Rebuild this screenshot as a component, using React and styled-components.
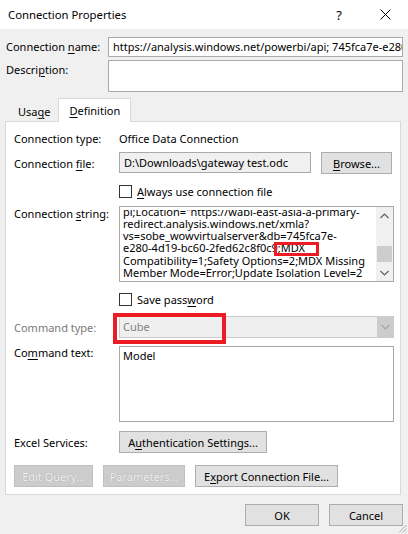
import React from 'react'
import styled, { createGlobalStyle } from 'styled-components'

const GlobalStyle = createGlobalStyle`
  html, body {
    margin: 0;
    padding: 0;
    background: #f0f0f0;
    overflow: hidden;
  }
`

const FONT = '"Noto Sans", "Liberation Sans", sans-serif'

const Window = styled.div`
  position: relative;
  width: 408px;
  height: 534px;
  background: #f0f0f0;
  font-family: ${FONT};
  font-size: 11px;
  color: #000;
  overflow: hidden;
`

const TitleBar = styled.div`
  display: flex;
  align-items: center;
  height: 29px;
  background: #fff;
  padding-left: 8px;
  font-size: 11.3px;
`

const Title = styled.span`
  flex: 1;
`

const TitleButton = styled.div`
  display: flex;
  align-items: center;
  justify-content: center;
  width: 46px;
  height: 29px;
  font-size: 13px;
`

const Header = styled.div`
  display: grid;
  grid-template-columns: 102px 295px;
  row-gap: 3px;
  padding: 8px 0 0 6px;
  align-items: start;
`

const HeaderLabel = styled.div`
  line-height: 20px;
  white-space: nowrap;
`

const Field = styled.div`
  height: ${(p) => p.h || 20}px;
  width: ${(p) => (p.w ? `${p.w}px` : 'auto')};
  box-sizing: border-box;
  border: 1px solid #a9a9a9;
  background: ${(p) => p.bg || '#fff'};
  padding: 0 4px;
  line-height: ${(p) => (p.h ? p.h - 2 : 18)}px;
  white-space: nowrap;
  overflow: hidden;
`

const TabStrip = styled.div`
  display: flex;
  align-items: flex-end;
  height: 24px;
  margin-top: 5px;
  padding-left: 8px;
`

const Tab = styled.div`
  box-sizing: border-box;
  height: ${(p) => (p.active ? 24 : 20)}px;
  padding: ${(p) => (p.active ? '0 10px' : '0 7px 0 9px')};
  display: flex;
  align-items: center;
  background: ${(p) => (p.active ? '#fff' : '#f0f0f0')};
  border: 1px solid ${(p) => (p.active ? '#d9d9d9' : 'transparent')};
  border-bottom: none;
  margin-bottom: ${(p) => (p.active ? -1 : 0)}px;
  position: relative;
  z-index: ${(p) => (p.active ? 1 : 0)};
`

const Panel = styled.div`
  box-sizing: border-box;
  margin-left: 5px;
  width: 396px;
  height: 374px;
  background: #fff;
  border: 1px solid #d9d9d9;
  padding: 0 0 0 8px;
`

const Row = styled.div`
  display: grid;
  grid-template-columns: 105px 1fr;
  align-items: ${(p) => p.align || 'center'};
  height: ${(p) => p.h}px;
  margin-top: ${(p) => p.top || 0}px;
  position: relative;
`

const Label = styled.div`
  white-space: nowrap;
  color: ${(p) => (p.disabled ? '#7a7a7a' : '#000')};
  line-height: ${(p) => p.lh || 'normal'};
`

const FileRow = styled.div`
  display: flex;
  gap: 10px;
`

const Button = styled.button`
  box-sizing: border-box;
  height: 22px;
  width: ${(p) => p.w}px;
  padding: 0;
  font-family: ${FONT};
  font-size: 11px;
  color: ${(p) => (p.disabled ? '#f2f2f2' : '#000')};
  text-shadow: ${(p) => (p.disabled ? '0 0 1px #9c9c9c' : 'none')};
  background: ${(p) => (p.disabled ? '#cccccc' : '#e1e1e1')};
  border: 1px solid ${(p) => (p.disabled ? '#bfbfbf' : '#adadad')};
  white-space: nowrap;
`

const CheckRow = styled.label`
  display: flex;
  align-items: center;
  gap: 5px;
  height: 14px;
`

const Box = styled.span`
  box-sizing: border-box;
  flex: none;
  width: 13px;
  height: 13px;
  border: 1px solid #333;
  background: #fff;
`

const TextArea = styled.div`
  position: relative;
  box-sizing: border-box;
  width: 275px;
  height: ${(p) => p.h}px;
  border: 1px solid #a9a9a9;
  background: #fff;
  display: flex;
`

const TextBody = styled.div`
  flex: 1;
  overflow: hidden;
  margin-top: ${(p) => p.inset || 0}px;
  padding: 0 3px;
  line-height: ${(p) => p.lh || 12.3}px;
`

const Scrolled = styled.div`
  margin-top: ${(p) => p.offset}px;
  white-space: pre;
`

const Mark = styled.span`
  position: relative;
  display: inline-block;
  height: 12.3px;
`

const ScrollBar = styled.div`
  width: 17px;
  display: flex;
  flex-direction: column;
  background: #f0f0f0;
`

const ScrollArrow = styled.div`
  height: 17px;
  display: flex;
  align-items: center;
  justify-content: center;
`

const ScrollTrack = styled.div`
  flex: 1;
  display: flex;
  flex-direction: column;
`

const Thumb = styled.div`
  margin: ${(p) => p.top}px 1px 0;
  height: 16px;
  background: #cdcdcd;
`

// red annotation frame drawn over a control
const Highlight = styled.div`
  position: absolute;
  box-sizing: border-box;
  left: ${(p) => p.x}px;
  top: ${(p) => p.y}px;
  width: ${(p) => p.w}px;
  height: ${(p) => p.h}px;
  border: ${(p) => p.b}px solid #ed1c24;
  pointer-events: none;
`

const Select = styled.div`
  position: relative;
  box-sizing: border-box;
  width: 275px;
  height: 22px;
  border: 1px solid #cccccc;
  background: #efefef;
  display: flex;
  color: #838383;
`

const SelectText = styled.div`
  flex: 1;
  padding-left: 3px;
  line-height: 20px;
`

const SelectArrow = styled.div`
  width: 16px;
  background: #cccccc;
  display: flex;
  align-items: center;
  justify-content: center;
`

const ButtonBar = styled.div`
  display: flex;
  gap: ${(p) => p.gap || 10}px;
  justify-content: ${(p) => p.justify || 'flex-start'};
  margin-top: ${(p) => p.top || 0}px;
  padding-right: ${(p) => p.right || 0}px;
`

const Grip = styled.svg`
  position: absolute;
  right: 1px;
  bottom: 1px;
`

const U = styled.span`
  text-decoration: underline;
  text-underline-offset: 2px;
`

const Chevron = ({ up, color = '#606060' }) => (
  <svg width="9" height="6" viewBox="0 0 9 6">
    <path
      d={up ? 'M0.5 5 L4.5 1 L8.5 5' : 'M0.5 1 L4.5 5 L8.5 1'}
      fill="none"
      stroke={color}
      strokeWidth="1.2"
    />
  </svg>
)

const connectionLines = [
  'pi;Location="https://wabi-east-asia-a-primary-\n',
  'redirect.analysis.windows.net/xmla?\n',
  'vs=sobe_wowvirtualserver&db=745fca7e-\n',
]
const connectionTail = [
  'Compatibility=1;Safety Options=2;MDX Missing\n',
  'Member Mode=Error;Update Isolation Level=2',
]

export default function App() {
  return (
    <>
      <GlobalStyle />
      <Window>
        <TitleBar>
          <Title>Connection Properties</Title>
          <TitleButton>?</TitleButton>
          <TitleButton>
            <svg width="11" height="11" viewBox="0 0 11 11">
              <path d="M0.5 0.5 L10.5 10.5 M10.5 0.5 L0.5 10.5" stroke="#000" strokeWidth="1" />
            </svg>
          </TitleButton>
        </TitleBar>

        <Header>
          <HeaderLabel>
            Connection <U>n</U>ame:
          </HeaderLabel>
          <Field>https://analysis.windows.net/powerbi/api; 745fca7e-e280-4d19-bc60-2fed62c8f0c9</Field>
          <HeaderLabel>
            Descri<U>p</U>tion:
          </HeaderLabel>
          <Field h={32} />
        </Header>

        <TabStrip>
          <Tab>
            Usa<U>g</U>e
          </Tab>
          <Tab active>
            <U>D</U>efinition
          </Tab>
        </TabStrip>

        <Panel>
          <Row h={18} top={7}>
            <Label>Connection type:</Label>
            <div>Office Data Connection</div>
          </Row>

          <Row h={22} top={5}>
            <Label>
              Connection <U>f</U>ile:
            </Label>
            <FileRow>
              <Field h={21} w={192} bg="#f0f0f0">
                D:\Downloads\gateway test.odc
              </Field>
              <Button w={71}>
                <U>B</U>rowse...
              </Button>
            </FileRow>
          </Row>

          <Row h={14} top={10}>
            <span />
            <CheckRow>
              <Box />
              <span>
                <U>A</U>lways use connection file
              </span>
            </CheckRow>
          </Row>

          <Row h={76} top={8} align="start">
            <Label lh="16px">
              Connection <U>s</U>tring:
            </Label>
            <TextArea h={76}>
              <TextBody inset={3}>
                <Scrolled offset={-4.5}>
                  {connectionLines.join('')}
                  e280-4d19-bc60-2fed62c8f0c9
                  <Mark>
                    ;MDX
                    <Highlight x={-4} y={-0.5} w={45} h={14.5} b={3} />
                  </Mark>
                  {'\n'}
                  {connectionTail.join('')}
                </Scrolled>
              </TextBody>
              <ScrollBar>
                <ScrollArrow>
                  <Chevron up />
                </ScrollArrow>
                <ScrollTrack>
                  <Thumb top={22} />
                </ScrollTrack>
                <ScrollArrow>
                  <Chevron />
                </ScrollArrow>
              </ScrollBar>
            </TextArea>
          </Row>

          <Row h={14} top={10}>
            <span />
            <CheckRow>
              <Box />
              <span>
                Save pass<U>w</U>ord
              </span>
            </CheckRow>
          </Row>

          <Row h={22} top={10}>
            <Label disabled>Command type:</Label>
            <Select>
              <SelectText>Cube</SelectText>
              <SelectArrow>
                <Chevron color="#a6a6a6" />
              </SelectArrow>
              <Highlight x={-7} y={-4} w={113} h={31} b={4} />
            </Select>
          </Row>

          <Row h={76} top={8} align="start">
            <Label lh="14px">
              Co<U>m</U>mand text:
            </Label>
            <TextArea h={76}>
              <TextBody lh={18}>Model</TextBody>
            </TextArea>
          </Row>

          <Row h={22} top={9}>
            <Label>Excel Services:</Label>
            <div>
              <Button w={148}>
                A<U>u</U>thentication Settings...
              </Button>
            </div>
          </Row>

          <ButtonBar top={12} gap={10}>
            <Button w={79} disabled>
              Edit Query...
            </Button>
            <Button w={82} disabled>
              Parameters...
            </Button>
            <Button w={143}>
              E<U>x</U>port Connection File...
            </Button>
          </ButtonBar>
        </Panel>

        <ButtonBar top={9} gap={10} justify="flex-end" right={5}>
          <Button w={74}>OK</Button>
          <Button w={74}>Cancel</Button>
        </ButtonBar>

        <Grip width="9" height="9" viewBox="0 0 9 9">
          <path d="M8.5 1 L1 8.5 M8.5 4.5 L4.5 8.5 M8.5 7.5 L7.5 8.5" stroke="#b0b0b0" strokeWidth="1" />
        </Grip>
      </Window>
    </>
  )
}
